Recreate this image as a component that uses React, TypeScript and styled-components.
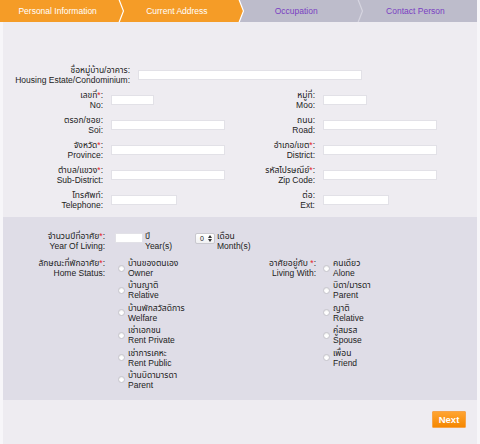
import React from "react";
import styled, { createGlobalStyle } from "styled-components";

const GlobalStyle = createGlobalStyle`
  html, body { margin: 0; padding: 0; background: #f7f6f9; }
  body {
    font-family: "Liberation Sans", "Noto Sans Thai", "Loma", "Garuda", "Tlwg Typo", "DejaVu Sans", sans-serif;
    color: #222;
  }
  * { box-sizing: border-box; }
`;

const Frame = styled.div`
  width: 480px;
  min-height: 444px;
  display: flex;
  flex-direction: column;
  padding-right: 3px;
  font-size: 8.5px;
  line-height: 10px;
`;

const TabBar = styled.div`
  display: flex;
  height: 22px;
`;

const Tab = styled.div<{ $active: boolean }>`
  position: relative;
  flex: 1;
  display: flex;
  align-items: center;
  justify-content: center;
  padding-right: 4px;
  background: ${(p) => (p.$active ? "#f59c27" : "#bdbccb")};
  color: ${(p) => (p.$active ? "#ffffff" : "#7a3fc2")};
  font-size: 8.5px;
`;

const Chevron = styled.svg`
  position: absolute;
  top: 0;
  right: -5px;
  width: 8px;
  height: 22px;
  z-index: 2;
`;

const Panel = styled.div<{ $tone: "light" | "dark" }>`
  margin-left: 3px;
  background: ${(p) => (p.$tone === "light" ? "#eeecf1" : "#dfdde7")};
`;

const AddressPanel = styled(Panel)`
  padding: 43px 0 7px 0;
  display: flex;
  flex-direction: column;
  gap: 5px;
`;

const WideRow = styled.div`
  display: grid;
  grid-template-columns: 127px 224px;
  column-gap: 8px;
  align-items: center;
`;

const FieldGrid = styled.div`
  display: grid;
  grid-template-columns: 100px 120px 76px 1fr;
  column-gap: 8px;
  row-gap: 5px;
  align-items: center;
`;

const Label = styled.div`
  text-align: right;
  line-height: 10px;
  color: #222;
  white-space: nowrap;
`;

const Req = styled.span`
  color: #e3242b;
`;

const TextInput = styled.div<{ $w: number }>`
  width: ${(p) => p.$w}px;
  height: 10px;
  background: #ffffff;
  border: 1px solid #e2e1e7;
`;

const LivingPanel = styled(Panel)`
  padding: 14px 0 10px 0;
  display: flex;
  flex-direction: column;
  gap: 7px;
`;

const LivingRow = styled.div`
  display: flex;
  align-items: flex-start;
`;

const Group = styled.div<{ $labelW: number; $gap: number; $w?: number }>`
  display: flex;
  align-items: flex-start;
  gap: ${(p) => p.$gap}px;
  width: ${(p) => (p.$w ? `${p.$w}px` : "auto")};
  & > ${Label} {
    width: ${(p) => p.$labelW}px;
    flex: none;
  }
`;

const YearInput = styled(TextInput)`
  margin-top: 2px;
`;

const Unit = styled.div<{ $w: number }>`
  width: ${(p) => p.$w}px;
  margin-left: 2px;
  line-height: 10px;
  color: #222;
`;

const SelectBox = styled.div`
  margin-top: 2px;
  width: 20px;
  height: 11px;
  border: 1px solid #c9c8cf;
  border-radius: 2px;
  background: linear-gradient(#ffffff, #f1f1f3);
  display: flex;
  align-items: center;
  justify-content: space-between;
  padding: 0 2px 0 4px;
  font-size: 7px;
  color: #222;
`;

const RadioList = styled.div`
  display: flex;
  flex-direction: column;
  gap: 2.4px;
`;

const RadioItem = styled.div`
  display: flex;
  align-items: center;
  gap: 3px;
  height: 20px;
`;

const RadioDot = styled.span`
  width: 7px;
  height: 7px;
  border-radius: 50%;
  background: #ffffff;
  border: 1px solid #c4c3ca;
  box-shadow: inset 0 1px 1px rgba(0, 0, 0, 0.08);
  flex: none;
  margin-left: 3px;
`;

const RadioText = styled.div`
  line-height: 10px;
  color: #222;
  white-space: nowrap;
`;

const Footer = styled(Panel)`
  flex: 1;
  display: flex;
  justify-content: flex-end;
  align-items: flex-start;
  padding: 11px 11px 0 0;
  background: #eeecf1;
`;

const NextButton = styled.button`
  width: 34px;
  height: 17px;
  padding: 0;
  border: 1px solid #f6a44a;
  border-radius: 1px;
  background: linear-gradient(#ffa431, #f58700);
  color: #ffffff;
  font-family: "Liberation Sans", sans-serif;
  font-size: 9.5px;
  font-weight: bold;
  cursor: pointer;
`;

const tabs = [
  { name: "Personal Information", active: true, stroke: "#ffffff" },
  { name: "Current Address", active: true, stroke: "#ffffff" },
  { name: "Occupation", active: false, stroke: "#d6d5e0" },
  { name: "Contact Person", active: false, stroke: null },
];

type F = { th: string; en: string; req?: boolean; w: number };

const gridRows: [F, F][] = [
  [
    { th: "เลขที่", en: "No:", req: true, w: 43 },
    { th: "หมู่ที่", en: "Moo:", w: 44 },
  ],
  [
    { th: "ตรอก/ซอย", en: "Soi:", w: 114 },
    { th: "ถนน", en: "Road:", w: 114 },
  ],
  [
    { th: "จังหวัด", en: "Province:", req: true, w: 114 },
    { th: "อำเภอ/เขต", en: "District:", req: true, w: 114 },
  ],
  [
    { th: "ตำบล/แขวง", en: "Sub-District:", req: true, w: 114 },
    { th: "รหัสไปรษณีย์", en: "Zip Code:", req: true, w: 114 },
  ],
  [
    { th: "โทรศัพท์", en: "Telephone:", w: 66 },
    { th: "ต่อ", en: "Ext:", w: 66 },
  ],
];

const homeStatus = [
  ["บ้านของตนเอง", "Owner"],
  ["บ้านญาติ", "Relative"],
  ["บ้านพักสวัสดิการ", "Welfare"],
  ["เช่าเอกชน", "Rent Private"],
  ["เช่าการเคหะ", "Rent Public"],
  ["บ้านบิดามารดา", "Parent"],
];

const livingWith = [
  ["คนเดียว", "Alone"],
  ["บิดา/มารดา", "Parent"],
  ["ญาติ", "Relative"],
  ["คู่สมรส", "Spouse"],
  ["เพื่อน", "Friend"],
];

const FieldLabel: React.FC<{ f: { th: string; en: string; req?: boolean }; space?: boolean }> = ({ f, space }) => (
  <Label>
    {f.th}
    {f.req && (
      <>
        {space ? " " : ""}
        <Req>*</Req>
      </>
    )}
    :
    <br />
    {f.en}
  </Label>
);

const Radios: React.FC<{ items: string[][] }> = ({ items }) => (
  <RadioList>
    {items.map(([th, en]) => (
      <RadioItem key={en + th}>
        <RadioDot />
        <RadioText>
          {th}
          <br />
          {en}
        </RadioText>
      </RadioItem>
    ))}
  </RadioList>
);

export default function App() {
  return (
    <>
      <GlobalStyle />
      <Frame>
        <TabBar>
          {tabs.map((t) => (
            <Tab key={t.name} $active={t.active}>
              {t.name}
              {t.stroke && (
                <Chevron viewBox="0 0 8 22">
                  <polygon points="0,0 3,0 7.5,11 3,22 0,22" fill={t.active ? "#f59c27" : "#bdbccb"} />
                  <polyline points="3,-0.5 7.5,11 3,22.5" fill="none" stroke={t.stroke} strokeWidth="1.2" />
                </Chevron>
              )}
            </Tab>
          ))}
        </TabBar>

        <AddressPanel $tone="light">
          <WideRow>
            <Label>
              ชื่อหมู่บ้าน/อาคาร:
              <br />
              Housing Estate/Condominium:
            </Label>
            <TextInput $w={224} />
          </WideRow>
          <FieldGrid>
            {gridRows.map(([a, b]) => (
              <React.Fragment key={a.en}>
                <FieldLabel f={a} />
                <TextInput $w={a.w} />
                <FieldLabel f={b} />
                <TextInput $w={b.w} />
              </React.Fragment>
            ))}
          </FieldGrid>
        </AddressPanel>

        <LivingPanel $tone="dark">
          <LivingRow>
            <Group $labelW={102} $gap={10}>
              <FieldLabel f={{ th: "จำนวนปีที่อาศัย", en: "Year Of Living:", req: true }} />
              <YearInput $w={28} />
            </Group>
            <Unit $w={50}>
              ปี
              <br />
              Year(s)
            </Unit>
            <SelectBox>
              <span>0</span>
              <svg width="4" height="7" viewBox="0 0 4 7">
                <polygon points="0,3 2,0 4,3" fill="#333" />
                <polygon points="0,4 2,7 4,4" fill="#333" />
              </svg>
            </SelectBox>
            <Unit $w={50}>
              เดือน
              <br />
              Month(s)
            </Unit>
          </LivingRow>
          <LivingRow>
            <Group $labelW={102} $gap={10} $w={237}>
              <FieldLabel f={{ th: "ลักษณะที่พักอาศัย", en: "Home Status:", req: true }} />
              <Radios items={homeStatus} />
            </Group>
            <Group $labelW={76} $gap={4}>
              <FieldLabel f={{ th: "อาศัยอยู่กับ", en: "Living With:", req: true }} space />
              <Radios items={livingWith} />
            </Group>
          </LivingRow>
        </LivingPanel>

        <Footer $tone="light">
          <NextButton type="button">Next</NextButton>
        </Footer>
      </Frame>
    </>
  );
}
